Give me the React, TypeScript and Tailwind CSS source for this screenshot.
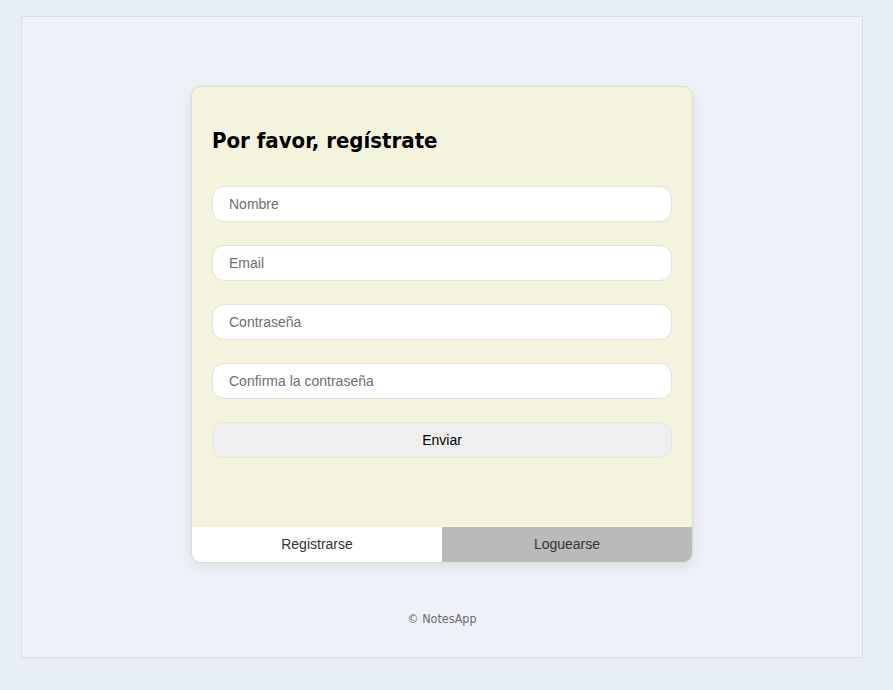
import React from "react";

const fields = ["Nombre", "Email", "Contraseña", "Confirma la contraseña"];

const App = () => {
  return (
    <div className="min-h-[690px] w-full bg-[#e8eef7] pt-[16px] pl-[21px] pr-[30px] pb-[32px]">
      <div className="flex h-[642px] w-[842px] flex-col items-center border border-[#d7dceb] bg-[#eef2f8] pt-[69px]">
        <div className="flex w-[502px] flex-col overflow-hidden rounded-[10px] border border-[#dcdcd0] bg-[#f4f4de] shadow-[0_4px_14px_rgba(0,0,0,0.08)]">
          <form
            className="flex h-[440px] flex-col px-[20px] pt-[39px]"
            onSubmit={(e) => e.preventDefault()}
          >
            <h1 className="mb-[30px] text-[22px] leading-[30px] font-bold text-black [font-family:'DejaVu_Sans_Condensed','DejaVu_Sans',sans-serif]">
              Por favor, regístrate
            </h1>
            {fields.map((f) => (
              <input
                key={f}
                type={f.startsWith("Con") ? "password" : "text"}
                placeholder={f}
                className="mb-[23px] h-[36px] w-full rounded-[12px] border border-[#e2e2dc] bg-white px-[16px] text-[14px] text-[#333] placeholder:text-[#6f6f6f] focus:outline-none [font-family:'Liberation_Sans',Arial,sans-serif]"
              />
            ))}
            <button
              type="submit"
              className="h-[36px] w-full rounded-[12px] border border-[#e6e6e0] bg-[#efefef] text-[14px] text-black [font-family:'Liberation_Sans',Arial,sans-serif]"
            >
              Enviar
            </button>
          </form>
          <div className="flex h-[35px] text-[14px] text-[#333] [font-family:'Liberation_Sans',Arial,sans-serif]">
            <button className="flex-1 bg-white">Registrarse</button>
            <button className="flex-1 bg-[#bababa]">Loguearse</button>
          </div>
        </div>
        <p className="mt-[47px] text-[12.5px] text-[#6b6b6b] [font-family:'DejaVu_Sans_Condensed','DejaVu_Sans',sans-serif]">
          © NotesApp
        </p>
      </div>
    </div>
  );
};

export default App;
